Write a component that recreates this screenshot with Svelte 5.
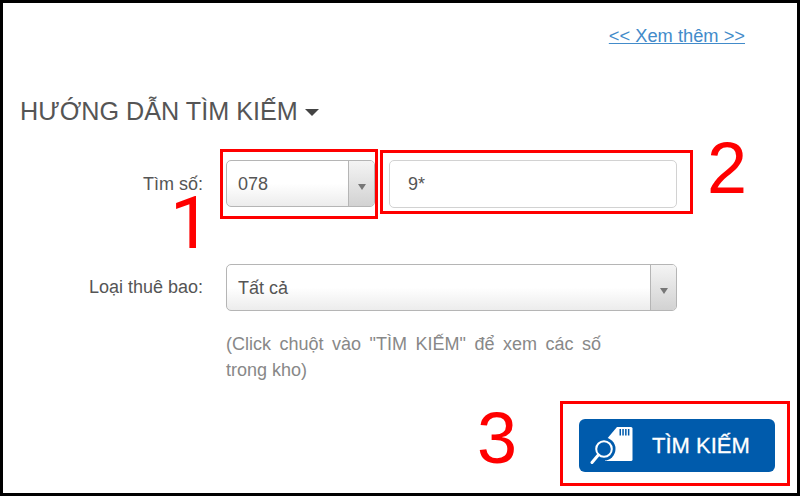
<script>
  const steps = [
    { n: 1, box: 'box1', num: 'num1' },
    { n: 2, box: 'box2', num: 'num2' },
    { n: 3, box: 'box3', num: 'num3' }
  ];
</script>

<div class="frame">
  <div class="more"><a href="#more">&lt;&lt; Xem thêm &gt;&gt;</a></div>
  <h2 class="title">HƯỚNG DẪN TÌM KIẾM <span class="caret"></span></h2>

  <div class="row first">
    <div class="label">Tìm số:</div>
    <div class="controls">
      <div class="select short">
        <span class="value">078</span>
        <span class="arrow"><i></i></span>
      </div>
      <div class="input">9*</div>
    </div>
  </div>

  <div class="row second">
    <div class="label">Loại thuê bao:</div>
    <div class="controls">
      <div class="select wide">
        <span class="value">Tất cả</span>
        <span class="arrow"><i></i></span>
      </div>
    </div>
  </div>

  <p class="hint">(Click chuột vào "TÌM KIẾM" để xem các số trong kho)</p>

  <div class="actions">
    <button class="search">
      <svg width="44" height="40" viewBox="0 0 44 40" aria-hidden="true">
        <path d="M16 14 L27 1 H41 Q42.500 1 42.500 2.500 V33.500 Q42.500 35 41 35 H15 V26 Z" fill="#fff"/>
        <path d="M29.500 3 h1.500 v6.500 h-1.500z M32.300 3 h1.500 v6.500 h-1.500z M35.100 3 h1.500 v6.500 h-1.500z M37.900 3 h1.500 v6.500 h-1.500z" fill="#005bac"/>
        <circle cx="14" cy="23" r="11.500" fill="#005bac"/>
        <circle cx="14" cy="23" r="7.800" fill="#005bac" stroke="#fff" stroke-width="2"/>
        <path d="M8.300 29 L2 36.500" stroke="#fff" stroke-width="3" stroke-linecap="round"/>
      </svg>
      <span>TÌM KIẾM</span>
    </button>
  </div>

  {#each steps as s}
    <div class="redbox {s.box}"></div>
    <div class="num {s.num}">{s.n}</div>
  {/each}
</div>

<style>
  :global(body) { margin: 0; background: #000; height: 496px; overflow: hidden; }
  .frame {
    position: relative;
    box-sizing: border-box;
    width: 794px;
    height: 490px;
    margin: 3px 3px 0;
    background: #fff;
    font-family: "Liberation Sans", Arial, sans-serif;
    color: #555;
    overflow: hidden;
  }
  .more {
    padding: 22px 52px 0 0;
    text-align: right;
    font-size: 18.300px;
    line-height: 22px;
  }
  .more a { color: #428bca; text-decoration: underline; }
  .title {
    margin: 50px 0 0 17px;
    font-size: 25.200px;
    line-height: 28px;
    font-weight: 400;
    color: #555;
    display: flex;
    align-items: center;
    gap: 7px;
  }
  .caret {
    width: 0; height: 0;
    border-left: 7px solid transparent;
    border-right: 7px solid transparent;
    border-top: 7px solid #444;
    margin-top: 2px;
  }
  .row { display: flex; align-items: center; }
  .first { margin-top: 35px; }
  .second { margin-top: 56px; }
  .label {
    width: 200px;
    text-align: right;
    font-size: 18px;
    color: #555;
    flex: none;
  }
  .controls { display: flex; margin-left: 23px; gap: 14px; align-items: flex-start; }
  .select {
    box-sizing: border-box;
    height: 47px;
    display: flex;
    border: 1px solid #b5b5b5;
    border-radius: 5px;
    background: linear-gradient(#fff 50%, #ececec);
    overflow: hidden;
  }
  .short { width: 149px; }
  .wide { width: 451px; }
  .value {
    flex: 1;
    padding-left: 11px;
    line-height: 47px;
    font-size: 18px;
    color: #555;
  }
  .arrow {
    width: 25px;
    border-left: 1px solid #b5b5b5;
    background: linear-gradient(#f4f4f4, #d2d2d2);
    display: flex;
    align-items: center;
    justify-content: center;
  }
  .arrow i {
    width: 0; height: 0;
    margin-top: 6px;
    border-left: 4.500px solid transparent;
    border-right: 4.500px solid transparent;
    border-top: 6px solid #777;
  }
  .input {
    box-sizing: border-box;
    width: 288px;
    height: 48px;
    border: 1px solid #d2d2d2;
    border-radius: 5px;
    padding-left: 18px;
    line-height: 46px;
    font-size: 18px;
    color: #555;
  }
  .hint {
    margin: 20px 0 0 223px;
    width: 375px;
    font-size: 18px;
    line-height: 26px;
    color: #888;
    text-align: justify;
  }
  .actions { display: flex; justify-content: flex-end; padding: 36px 22px 0 0; }
  .search {
    box-sizing: border-box;
    width: 196px;
    height: 53px;
    border: 0;
    border-radius: 6px;
    background: #005bac;
    color: #fff;
    font-family: inherit;
    font-size: 22px;
    padding: 0 0 0 11px;
    display: flex;
    align-items: center;
    gap: 18px;
    -webkit-text-stroke: 0.3px #fff;
  }
  .redbox { position: absolute; border: 3px solid #f00; box-sizing: border-box; }
  .box1 { left: 217px; top: 146px; width: 158px; height: 70px; }
  .box2 { left: 377px; top: 147px; width: 313px; height: 64px; }
  .box3 { left: 557px; top: 398px; width: 230px; height: 85px; }
  .num {
    position: absolute;
    font-size: 72px;
    line-height: 72px;
    color: #f00;
  }
  .num1 { left: 167px; top: 184px; font-family: Roboto, sans-serif; font-size: 73px; }
  .num2 { left: 704px; top: 129px; }
  .num3 { left: 474px; top: 399px; }
</style>
